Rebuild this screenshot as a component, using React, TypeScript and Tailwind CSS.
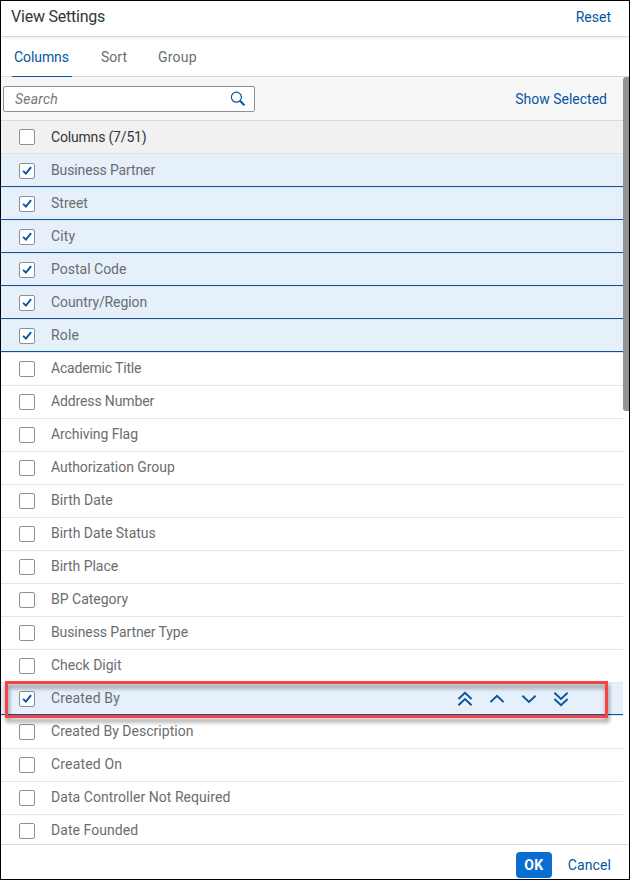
import React from "react";

type Column = { label: string; checked?: boolean; track: string; arrows?: boolean };

const columns: Column[] = [
  { label: "Business Partner", checked: true, track: "tracking-[-0.13px]" },
  { label: "Street", checked: true, track: "" },
  { label: "City", checked: true, track: "tracking-[0.1px]" },
  { label: "Postal Code", checked: true, track: "" },
  { label: "Country/Region", checked: true, track: "tracking-[-0.1px]" },
  { label: "Role", checked: true, track: "tracking-[0.2px]" },
  { label: "Academic Title", track: "tracking-[-0.18px]" },
  { label: "Address Number", track: "tracking-[-0.13px]" },
  { label: "Archiving Flag", track: "tracking-[-0.08px]" },
  { label: "Authorization Group", track: "tracking-[-0.05px]" },
  { label: "Birth Date", track: "" },
  { label: "Birth Date Status", track: "tracking-[-0.04px]" },
  { label: "Birth Place", track: "tracking-[-0.05px]" },
  { label: "BP Category", track: "" },
  { label: "Business Partner Type", track: "tracking-[-0.1px]" },
  { label: "Check Digit", track: "" },
  { label: "Created By", checked: true, track: "tracking-[0.15px]", arrows: true },
  { label: "Created By Description", track: "tracking-[0.03px]" },
  { label: "Created On", track: "tracking-[0.17px]" },
  { label: "Data Controller Not Required", track: "tracking-[0.05px]" },
  { label: "Date Founded", track: "tracking-[0.06px]" },
];

function Checkbox({ checked }: { checked?: boolean }) {
  return (
    <span className="flex size-4 shrink-0 items-center justify-center rounded-[2px] border border-[#89919a] bg-white">
      {checked && (
        <svg width="14" height="14" viewBox="0 0 14 14" fill="none" stroke="#0854a0" strokeWidth="1.9">
          <path d="M3.1 6.9 5.9 9.6 11.1 3.2" />
        </svg>
      )}
    </span>
  );
}

function Arrow({ d }: { d: string }) {
  return (
    <svg width="16" height="16" viewBox="0 0 16 16" fill="none" stroke="#0854a0" strokeWidth="1.9">
      <path d={d} />
    </svg>
  );
}

function Row({ column, first }: { column: Column; first: boolean }) {
  const look = column.checked ? "border-b border-b-[#0854a0] bg-[#e5f0fa]" : "bg-white";
  const size = first ? "h-[34px] pt-[9px]" : "h-[33px] pt-2";
  return (
    <div className={`relative flex shrink-0 items-start border-t border-t-[#e5e5e5] pl-[18px] ${size} ${look}`}>
      <Checkbox checked={column.checked} />
      <span className={`ml-4 whitespace-nowrap leading-[15px] text-[#6a6d70] ${column.track}`}>{column.label}</span>
      {column.arrows && (
        <>
          <span className="ml-auto mr-[54px] flex gap-4">
            <Arrow d="M1.4 8 8 1.8 14.6 8M1.4 14.2 8 8 14.6 14.2" />
            <Arrow d="M1.4 11.1 8 4.9 14.6 11.1" />
            <Arrow d="M1.4 4.8 8 11 14.6 4.8" />
            <Arrow d="M1.4 1.8 8 8 14.6 1.8M1.4 8 8 14.2 14.6 8" />
          </span>
          <span className="absolute -top-[2px] left-1 z-10 h-[37px] w-[603px] border-[3px] border-[#fa4144] drop-shadow-[1px_4px_2px_rgba(0,0,0,0.45)]" />
        </>
      )}
    </div>
  );
}

export default function App() {
  return (
    <div className="flex h-[880px] w-[630px] flex-col overflow-hidden border border-black bg-white font-[Roboto,sans-serif] text-sm text-[#32363a]">
      <header className="z-10 flex h-9 shrink-0 items-center justify-between border-b border-[#d9d9d9] pl-2.5 pr-[18px] pb-[3px] shadow-[0_1px_3px_rgba(0,0,0,0.08)]">
        <h1 className="text-base tracking-[-0.22px]">View Settings</h1>
        <button className="text-[#0854a0]">Reset</button>
      </header>
      <nav className="flex h-10 shrink-0 border-b border-[#d9d9d9] pl-[11px] text-[#6a6d70]">
        <span className="-mb-px h-10 w-[60px] border-b border-[#0854a0] pl-0.5 leading-10 tracking-[-0.08px] text-[#0854a0]">Columns</span>
        <span className="ml-7 w-[58px] pl-px leading-10">Sort</span>
        <span className="leading-10 tracking-[0.2px]">Group</span>
      </nav>
      <div className="flex min-h-0 flex-1">
        <main className="flex w-[622px] flex-col overflow-hidden">
          <div className="flex h-11 shrink-0 items-center justify-between border-b border-[#d9d9d9] bg-[#f7f7f7] pl-0.5 pr-4">
            <div className="flex h-[26px] w-[252px] items-center justify-between rounded-[2px] border border-[#89919a] bg-white pl-[11px] pr-2">
              <span className="italic tracking-[0.2px] text-[#74777a]">Search</span>
              <svg width="16" height="16" viewBox="0 0 16 16" fill="none" stroke="#0854a0">
                <circle cx="6.4" cy="6.2" r="5" strokeWidth="1.2" />
                <path d="m10 9.8 4.4 4.6" strokeWidth="2" />
              </svg>
            </div>
            <button className="text-[#0854a0]">Show Selected</button>
          </div>
          <div className="flex h-8 shrink-0 items-start bg-[#f1f1f1] pl-[18px] pt-2">
            <Checkbox />
            <span className="ml-4 leading-4 tracking-[-0.18px]">Columns (7/51)</span>
          </div>
          {columns.map((column, i) => (
            <Row key={column.label} column={column} first={i === 0} />
          ))}
        </main>
        <div className="h-[334px] w-1.5 rounded-l-[3px] bg-[#949494]" />
      </div>
      <footer className="flex h-[35px] shrink-0 items-start justify-end border-t border-[#d9d9d9] pr-[18px] pt-[7px]">
        <button className="h-[26px] w-9 rounded bg-[#0a6ed1] font-bold tracking-[0.2px] text-white">OK</button>
        <button className="ml-4 h-[26px] tracking-[0.1px] text-[#0854a0]">Cancel</button>
      </footer>
    </div>
  );
}
